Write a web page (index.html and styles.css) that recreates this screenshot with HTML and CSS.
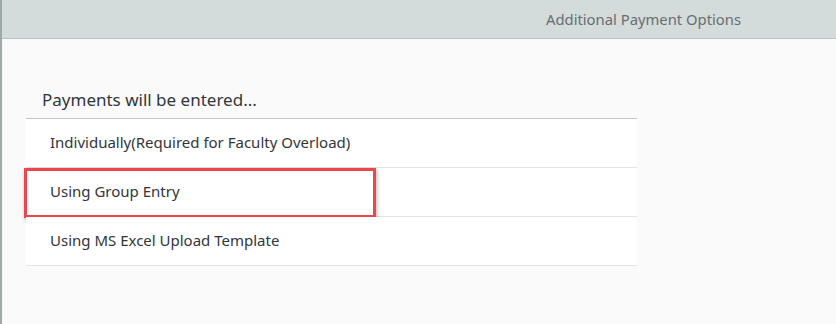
FILE: index.html
```html
<!DOCTYPE html>
<html>
<head>
<meta charset="utf-8">
<link rel="stylesheet" href="styles.css">
</head>
<body>
<div class="shell">
  <header class="bar">
    <span class="bar-title">Additional Payment Options</span>
  </header>
  <main class="content">
    <h2 class="list-title">Payments will be entered...</h2>
    <ul class="list">
      <li class="item">Individually(Required for Faculty Overload)</li>
      <li class="item item-highlight"><span class="highlight"></span>Using Group Entry</li>
      <li class="item">Using MS Excel Upload Template</li>
    </ul>
  </main>
</div>
</body>
</html>
```

FILE: styles.css
```css
html, body {
  margin: 0;
  padding: 0;
  height: 100%;
}
body {
  font-family: "Noto Sans", "Open Sans", sans-serif;
  background: #fafafa;
}
.shell {
  height: 324px;
  border-left: 2px solid #9aaba8;
  box-sizing: border-box;
  display: flex;
  flex-direction: column;
}
.bar {
  height: 38px;
  background: #d3dcdb;
  border-bottom: 1px solid #b9c8c5;
  display: flex;
  align-items: center;
  justify-content: flex-end;
  padding-right: 95px;
  flex: none;
}
.bar-title {
  font-size: 14.8px;
  color: #6a6d70;
}
.content {
  padding: 0 0 0 24px;
}
.list-title {
  margin: 44px 0 0 16px;
  font-weight: normal;
  font-size: 17px;
  color: #32363a;
  height: 35px;
  line-height: 34px;
}
.list {
  list-style: none;
  margin: 0;
  padding: 0;
  width: 611px;
  border-top: 1px solid #c6c6c6;
}
.item {
  position: relative;
  height: 48px;
  border-bottom: 1px solid #e4e4e4;
  background: #fff;
  padding-left: 24px;
  font-size: 15px;
  color: #32363a;
  line-height: 47px;
}
.highlight {
  position: absolute;
  left: -2px;
  top: 0;
  width: 346px;
  height: 44px;
  border: 3px solid #e8474d;
  box-shadow: 1px 2px 4px rgba(0,0,0,0.3);
}
```
